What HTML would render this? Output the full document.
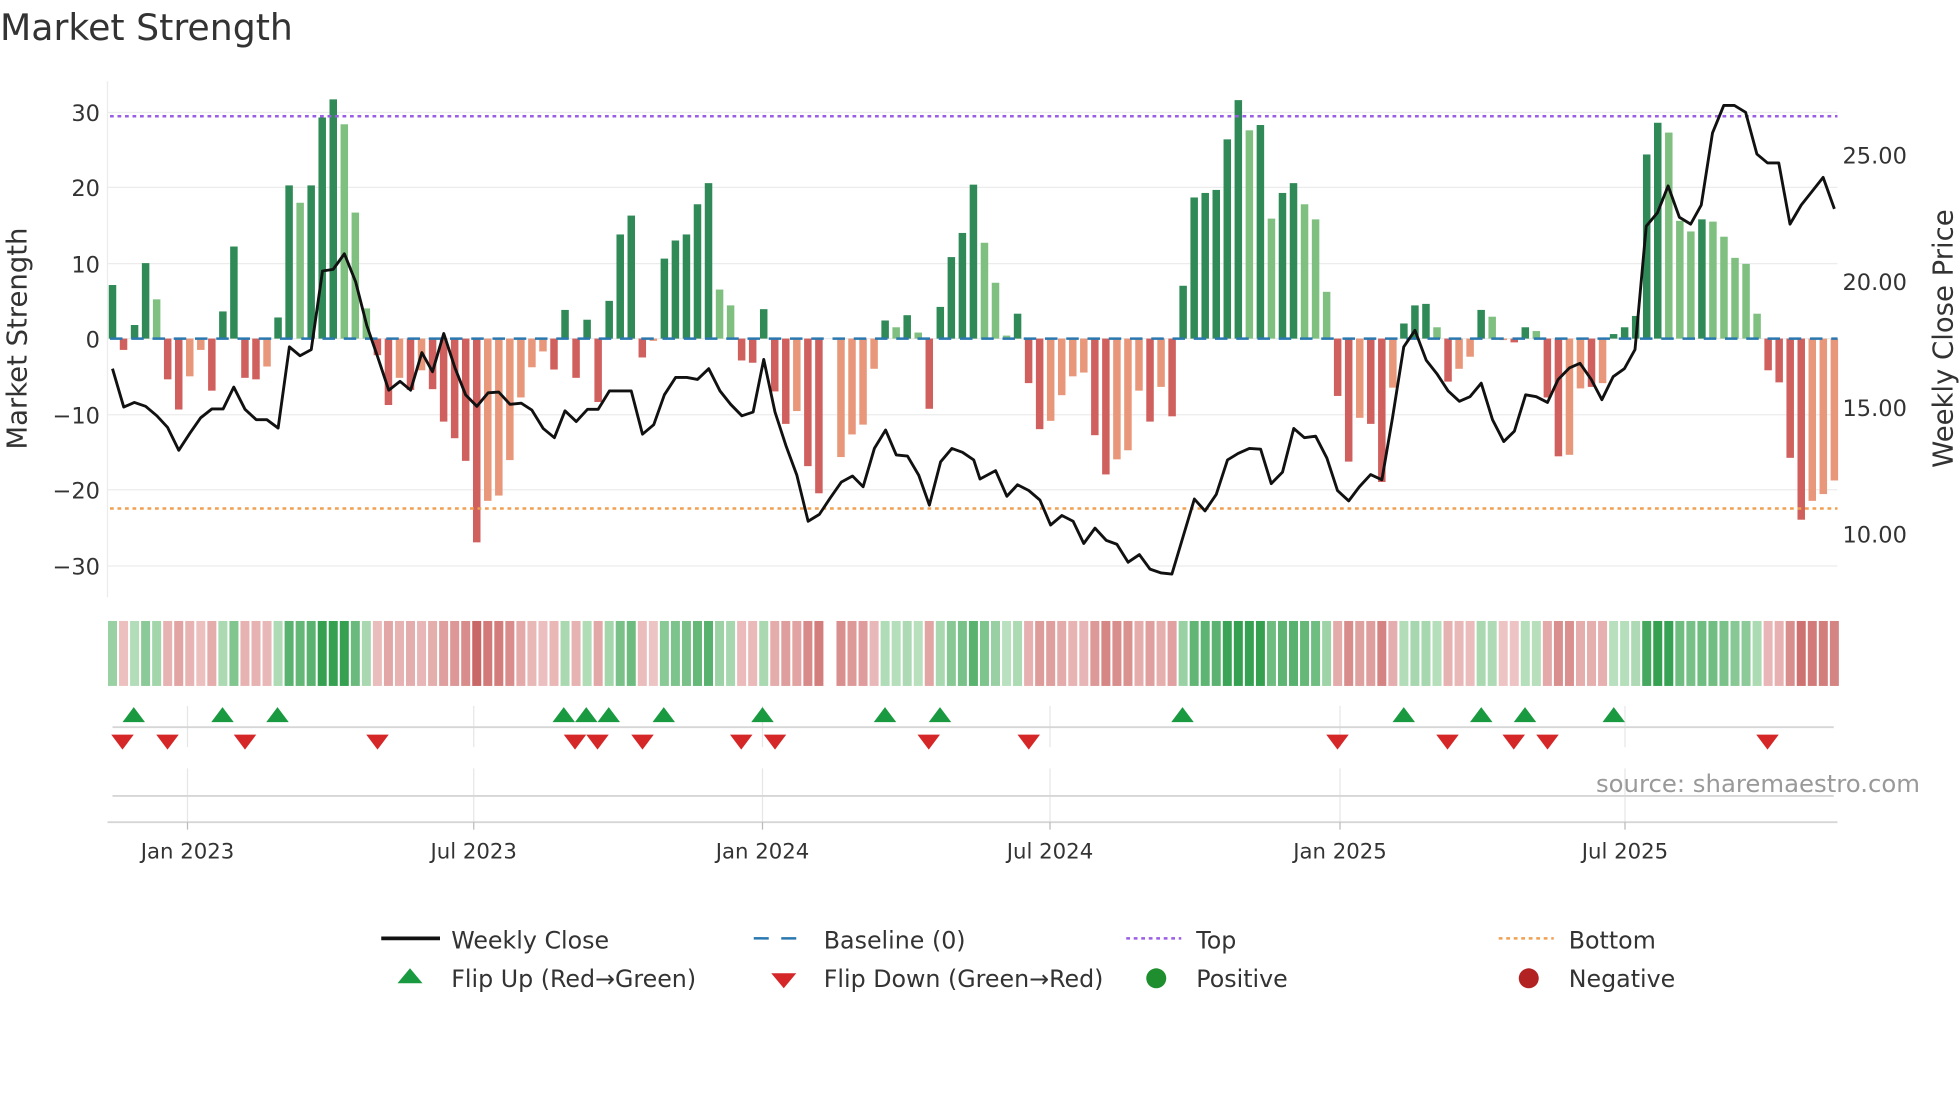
<!DOCTYPE html>
<html><head><meta charset="utf-8"><style>
html,body{margin:0;padding:0;background:#fff;}
svg{display:block;}
text{font-family:"DejaVu Sans","Liberation Sans",sans-serif;fill:#333;}
</style></head><body>
<svg id="s" width="1960" height="1102" viewBox="0 0 1568 882" preserveAspectRatio="none" xmlns="http://www.w3.org/2000/svg">
<rect width="1568" height="882" fill="#fff"/>
<text x="0" y="32" font-size="29">Market Strength</text>
<g stroke="#ececec" stroke-width="1">
<line x1="86" x2="1470" y1="90" y2="90"/><line x1="86" x2="1470" y1="150" y2="150"/>
<line x1="86" x2="1470" y1="211" y2="211"/><line x1="86" x2="1470" y1="271" y2="271"/>
<line x1="86" x2="1470" y1="332" y2="332"/><line x1="86" x2="1470" y1="392" y2="392"/>
<line x1="86" x2="1470" y1="453" y2="453"/>
<line x1="86" x2="86" y1="65" y2="478"/>
</g>
<g font-size="18" text-anchor="end">
<text x="80" y="97">30</text><text x="80" y="157">20</text><text x="80" y="218">10</text>
<text x="80" y="278">0</text><text x="80" y="339">−10</text><text x="80" y="399">−20</text><text x="80" y="460">−30</text>
</g>
<g font-size="18">
<text x="1474" y="131">25.00</text><text x="1474" y="232">20.00</text>
<text x="1474" y="333">15.00</text><text x="1474" y="434">10.00</text>
</g>
<text font-size="22" transform="translate(21,271) rotate(-90)" text-anchor="middle">Market Strength</text>
<text font-size="22" transform="translate(1562,271) rotate(-90)" text-anchor="middle">Weekly Close Price</text>
<g id="bars"></g>
<line x1="88" x2="1470" y1="271" y2="271" stroke="#2a78b0" stroke-width="2" stroke-dasharray="10 7"/>
<line x1="88" x2="1470" y1="93" y2="93" stroke="#9b5de5" stroke-width="2" stroke-dasharray="3 3"/>
<line x1="88" x2="1470" y1="407" y2="407" stroke="#f0a050" stroke-width="2" stroke-dasharray="3 3"/>
<polyline id="price" fill="none" stroke="#111" stroke-width="2.3" stroke-linejoin="round"/>
<g id="strip"></g>
<g stroke="#e6e6e6" stroke-width="1">
<line x1="150" x2="150" y1="565" y2="598"/><line x1="379" x2="379" y1="565" y2="598"/>
<line x1="610" x2="610" y1="565" y2="598"/><line x1="840" x2="840" y1="565" y2="598"/>
<line x1="1072" x2="1072" y1="565" y2="598"/><line x1="1300" x2="1300" y1="565" y2="598"/>
<line x1="150" x2="150" y1="615" y2="658"/><line x1="379" x2="379" y1="615" y2="658"/>
<line x1="610" x2="610" y1="615" y2="658"/><line x1="840" x2="840" y1="615" y2="658"/>
<line x1="1072" x2="1072" y1="615" y2="658"/><line x1="1300" x2="1300" y1="615" y2="658"/>
</g>
<g stroke="#d6d6d6" stroke-width="1.5">
<line x1="90" x2="1467" y1="582" y2="582"/>
<line x1="90" x2="1467" y1="637" y2="637"/>
<line x1="86" x2="1470" y1="658" y2="658"/>
</g>
<g stroke="#bbb" stroke-width="1">
<line x1="150" x2="150" y1="658" y2="664"/><line x1="379" x2="379" y1="658" y2="664"/>
<line x1="610" x2="610" y1="658" y2="664"/><line x1="840" x2="840" y1="658" y2="664"/>
<line x1="1072" x2="1072" y1="658" y2="664"/><line x1="1300" x2="1300" y1="658" y2="664"/>
</g>
<g id="marks"></g>
<text x="1536" y="634" font-size="19.5" text-anchor="end" style="fill:#999">source: sharemaestro.com</text>
<g font-size="17" text-anchor="middle">
<text x="150" y="687">Jan 2023</text><text x="379" y="687">Jul 2023</text>
<text x="610" y="687">Jan 2024</text><text x="840" y="687">Jul 2024</text>
<text x="1072" y="687">Jan 2025</text><text x="1300" y="687">Jul 2025</text>
</g>
<g font-size="19">
<line x1="305" x2="352" y1="751" y2="751" stroke="#111" stroke-width="3"/>
<text x="361" y="759">Weekly Close</text>
<line x1="603" x2="645" y1="751" y2="751" stroke="#2a78b0" stroke-width="2" stroke-dasharray="12 10"/>
<text x="659" y="759">Baseline (0)</text>
<line x1="901" x2="945" y1="751" y2="751" stroke="#9b5de5" stroke-width="2" stroke-dasharray="3 3"/>
<text x="957" y="759">Top</text>
<line x1="1199" x2="1243" y1="751" y2="751" stroke="#f0a050" stroke-width="2" stroke-dasharray="3 3"/>
<text x="1255" y="759">Bottom</text>
<polygon points="328,775 338,787 318,787" fill="#1a9a40"/>
<text x="361" y="790">Flip Up (Red→Green)</text>
<polygon points="617,779 637,779 627,791" fill="#d62728"/>
<text x="659" y="790">Flip Down (Green→Red)</text>
<circle cx="925" cy="783" r="8" fill="#1e8e2e"/>
<text x="957" y="790">Positive</text>
<circle cx="1223" cy="783" r="8" fill="#b22222"/>
<text x="1255" y="790">Negative</text>
</g>
</svg>
<script>
var NS="http://www.w3.org/2000/svg";
var B=[[7.1,'d'],[-1.5,'r'],[1.8,'d'],[10,'d'],[5.2,'l'],[-5.4,'r'],[-9.4,'r'],[-5,'o'],[-1.5,'o'],[-6.9,'r'],
[3.6,'d'],[12.2,'d'],[-5.2,'r'],[-5.4,'r'],[-3.7,'o'],[2.8,'d'],[20.3,'d'],[18,'l'],[20.3,'d'],[29.3,'d'],
[31.7,'d'],[28.4,'l'],[16.7,'l'],[4,'l'],[-2.2,'r'],[-8.8,'r'],[-5.2,'o'],[-6.8,'r'],[-4.2,'o'],[-6.7,'r'],
[-11,'r'],[-13.2,'r'],[-16.2,'r'],[-27,'r'],[-21.5,'o'],[-20.8,'o'],[-16.1,'o'],[-7.8,'o'],[-3.8,'o'],[-1.7,'o'],
[-4.1,'r'],[3.8,'d'],[-5.2,'r'],[2.5,'d'],[-8.4,'r'],[5,'d'],[13.8,'d'],[16.3,'d'],[-2.5,'r'],[-0.3,'o'],
[10.6,'d'],[13,'d'],[13.8,'d'],[17.8,'d'],[20.6,'d'],[6.5,'l'],[4.4,'l'],[-2.9,'r'],[-3.2,'r'],[3.9,'d'],
[-7,'r'],[-11.3,'r'],[-9.6,'o'],[-16.9,'r'],[-20.5,'r'],[0,'o'],[-15.7,'o'],[-12.7,'o'],[-11.4,'o'],[-4,'o'],
[2.4,'d'],[1.5,'l'],[3.1,'d'],[0.8,'l'],[-9.3,'r'],[4.2,'d'],[10.8,'d'],[14,'d'],[20.4,'d'],
[12.7,'l'],[7.4,'l'],[0.4,'l'],[3.3,'d'],[-5.9,'r'],[-12,'r'],[-10.9,'o'],[-7.5,'o'],[-5,'o'],[-4.5,'o'],
[-12.8,'r'],[-18,'r'],[-16,'o'],[-14.8,'o'],[-6.9,'o'],[-11,'r'],[-6.4,'o'],[-10.3,'r'],[7,'d'],[18.7,'d'],
[19.3,'d'],[19.7,'d'],[26.4,'d'],[31.6,'d'],[27.6,'l'],[28.3,'d'],[15.9,'l'],[19.3,'d'],[20.6,'d'],[17.8,'l'],
[15.8,'l'],[6.2,'l'],[-7.6,'r'],[-16.3,'r'],[-10.5,'o'],[-11.3,'r'],[-19,'r'],[-6.5,'o'],[2,'d'],[4.4,'d'],
[4.6,'d'],[1.5,'l'],[-5.7,'r'],[-4,'o'],[-2.4,'o'],[3.8,'d'],[2.9,'l'],[-0.2,'o'],[-0.5,'r'],[1.5,'d'],
[1,'l'],[-7.8,'r'],[-15.6,'r'],[-15.4,'o'],[-6.6,'o'],[-6.4,'r'],[-5.9,'o'],[0.6,'d'],[1.5,'d'],[3,'d'],
[24.4,'d'],[28.6,'d'],[27.3,'l'],[15.6,'l'],[14.2,'l'],[15.8,'d'],[15.5,'l'],[13.5,'l'],[10.7,'l'],[9.9,'l'],
[3.3,'l'],[-4.2,'r'],[-5.8,'r'],[-15.8,'r'],[-24,'r'],[-21.5,'o'],[-20.6,'o'],[-18.8,'o']];
var C={d:'#2f8a57',l:'#7fc081',r:'#d0605e',o:'#e8977a'};
var bars=document.getElementById('bars'),strip=document.getElementById('strip');
function mix(a,b,t){var r=[];for(var i=0;i<3;i++)r.push(Math.round(a[i]+(b[i]-a[i])*t));return 'rgb('+r.join(',')+')';}
var step=8.83;
B.forEach(function(b,i){
 var x=90+i*step,v=b[0],y0=271,y1=271-v*6.04;
 if(Math.abs(v)>0.05){
 var r=document.createElementNS(NS,'rect');
 r.setAttribute('x',x-3);r.setAttribute('width',6);
 r.setAttribute('y',Math.min(y0,y1));r.setAttribute('height',Math.abs(y1-y0));
 r.setAttribute('fill',C[b[1]]);bars.appendChild(r);}
 if(v!==0){
 var t=Math.min(Math.abs(v)/28,1);t=0.15+0.85*t;
 var col=v>0?mix([212,237,212],[52,160,80],t):mix([244,214,214],[200,100,98],t);
 var s=document.createElementNS(NS,'rect');
 s.setAttribute('x',x-3.6);s.setAttribute('width',7.2);s.setAttribute('y',497);s.setAttribute('height',52);
 s.setAttribute('fill',col);strip.appendChild(s);}
});
var P1=[[180,962],[198,1062],[215,1050],[233,1060],[251,1085],[268,1115],[286,1175],[304,1130],[321,1090],[339,1067],[357,1067],[374,1010],[392,1068],[410,1095],[427,1095],[445,1117],[463,905],[480,928],[498,912],[516,707],[533,703],[551,662],[569,735],[587,850],[604,930],[622,1018],[640,995],[657,1018],[675,920],[692,970],[710,870],[728,960],[745,1030],[763,1060],[781,1025],[798,1023],[816,1055],[834,1052],[851,1070],[869,1118],[887,1142],[904,1072],[922,1100],[940,1068],[957,1068],[975,1020],[993,1020],[1010,1020],[1028,1133],[1046,1108],[1063,1030],[1081,985],[1099,985],[1116,990],[1134,962],[1152,1020],[1169,1055],[1187,1085],[1205,1075],[1222,938],[1240,1075],[1258,1165],[1275,1240],[1293,1360],[1311,1342],[1328,1300],[1346,1258],[1364,1242],[1381,1270],[1399,1170],[1417,1122],[1434,1187],[1452,1190],[1470,1240],[1487,1318],[1505,1205],[1523,1170],[1540,1180],[1558,1200]];
var P2=[[0,1250],[25,1228],[43,1295],[60,1265],[78,1280],[96,1305],[113,1370],[131,1345],[149,1360],[166,1418],[184,1378],[202,1410],[219,1420],[237,1467],[255,1447],[272,1485],[290,1495],[307,1498],[325,1400],[343,1302],[360,1333],[378,1290],[396,1200],[413,1183],[431,1170],[449,1172],[466,1262],[484,1232],[502,1118],[519,1142],[537,1138],[555,1195],[572,1280],[590,1307],[607,1270],[625,1238],[643,1252],[660,1090],[678,905],[696,862],[714,940],[731,975],[749,1020],[767,1047],[784,1035],[802,1000],[820,1095],[838,1152],[855,1125],[873,1030],[890,1035],[908,1050],[925,990],[943,960],[960,948],[978,990],[995,1043],[1013,983],[1031,962],[1048,912],[1066,590],[1084,555],[1101,485],[1119,567],[1137,585],[1154,535],[1172,347],[1190,275],[1207,275],[1225,293],[1243,402],[1260,425],[1278,425],[1296,585],[1314,535],[1331,500],[1349,463],[1367,545]];
var pts=[];
P1.forEach(function(p){pts.push((p[0]/2).toFixed(1)+','+(p[1]/3.26).toFixed(1));});
P2.forEach(function(p){pts.push((784+p[0]/2).toFixed(1)+','+(p[1]/3.26).toFixed(1));});
document.getElementById('price').setAttribute('points',pts.join(' '));
var marks=document.getElementById('marks');
[107,178,222,451,469,487,531,610,708,752,946,1123,1185,1220,1291].forEach(function(x){
 var p=document.createElementNS(NS,'polygon');
 p.setAttribute('points',x+',566 '+(x+9)+',578 '+(x-9)+',578');p.setAttribute('fill','#1a9a40');marks.appendChild(p);});
[98,134,196,302,460,478,514,593,620,743,823,1070,1158,1211,1238,1414].forEach(function(x){
 var p=document.createElementNS(NS,'polygon');
 p.setAttribute('points',(x-9)+',588 '+(x+9)+',588 '+x+',600');p.setAttribute('fill','#d62728');marks.appendChild(p);});
</script>
</body></html>
